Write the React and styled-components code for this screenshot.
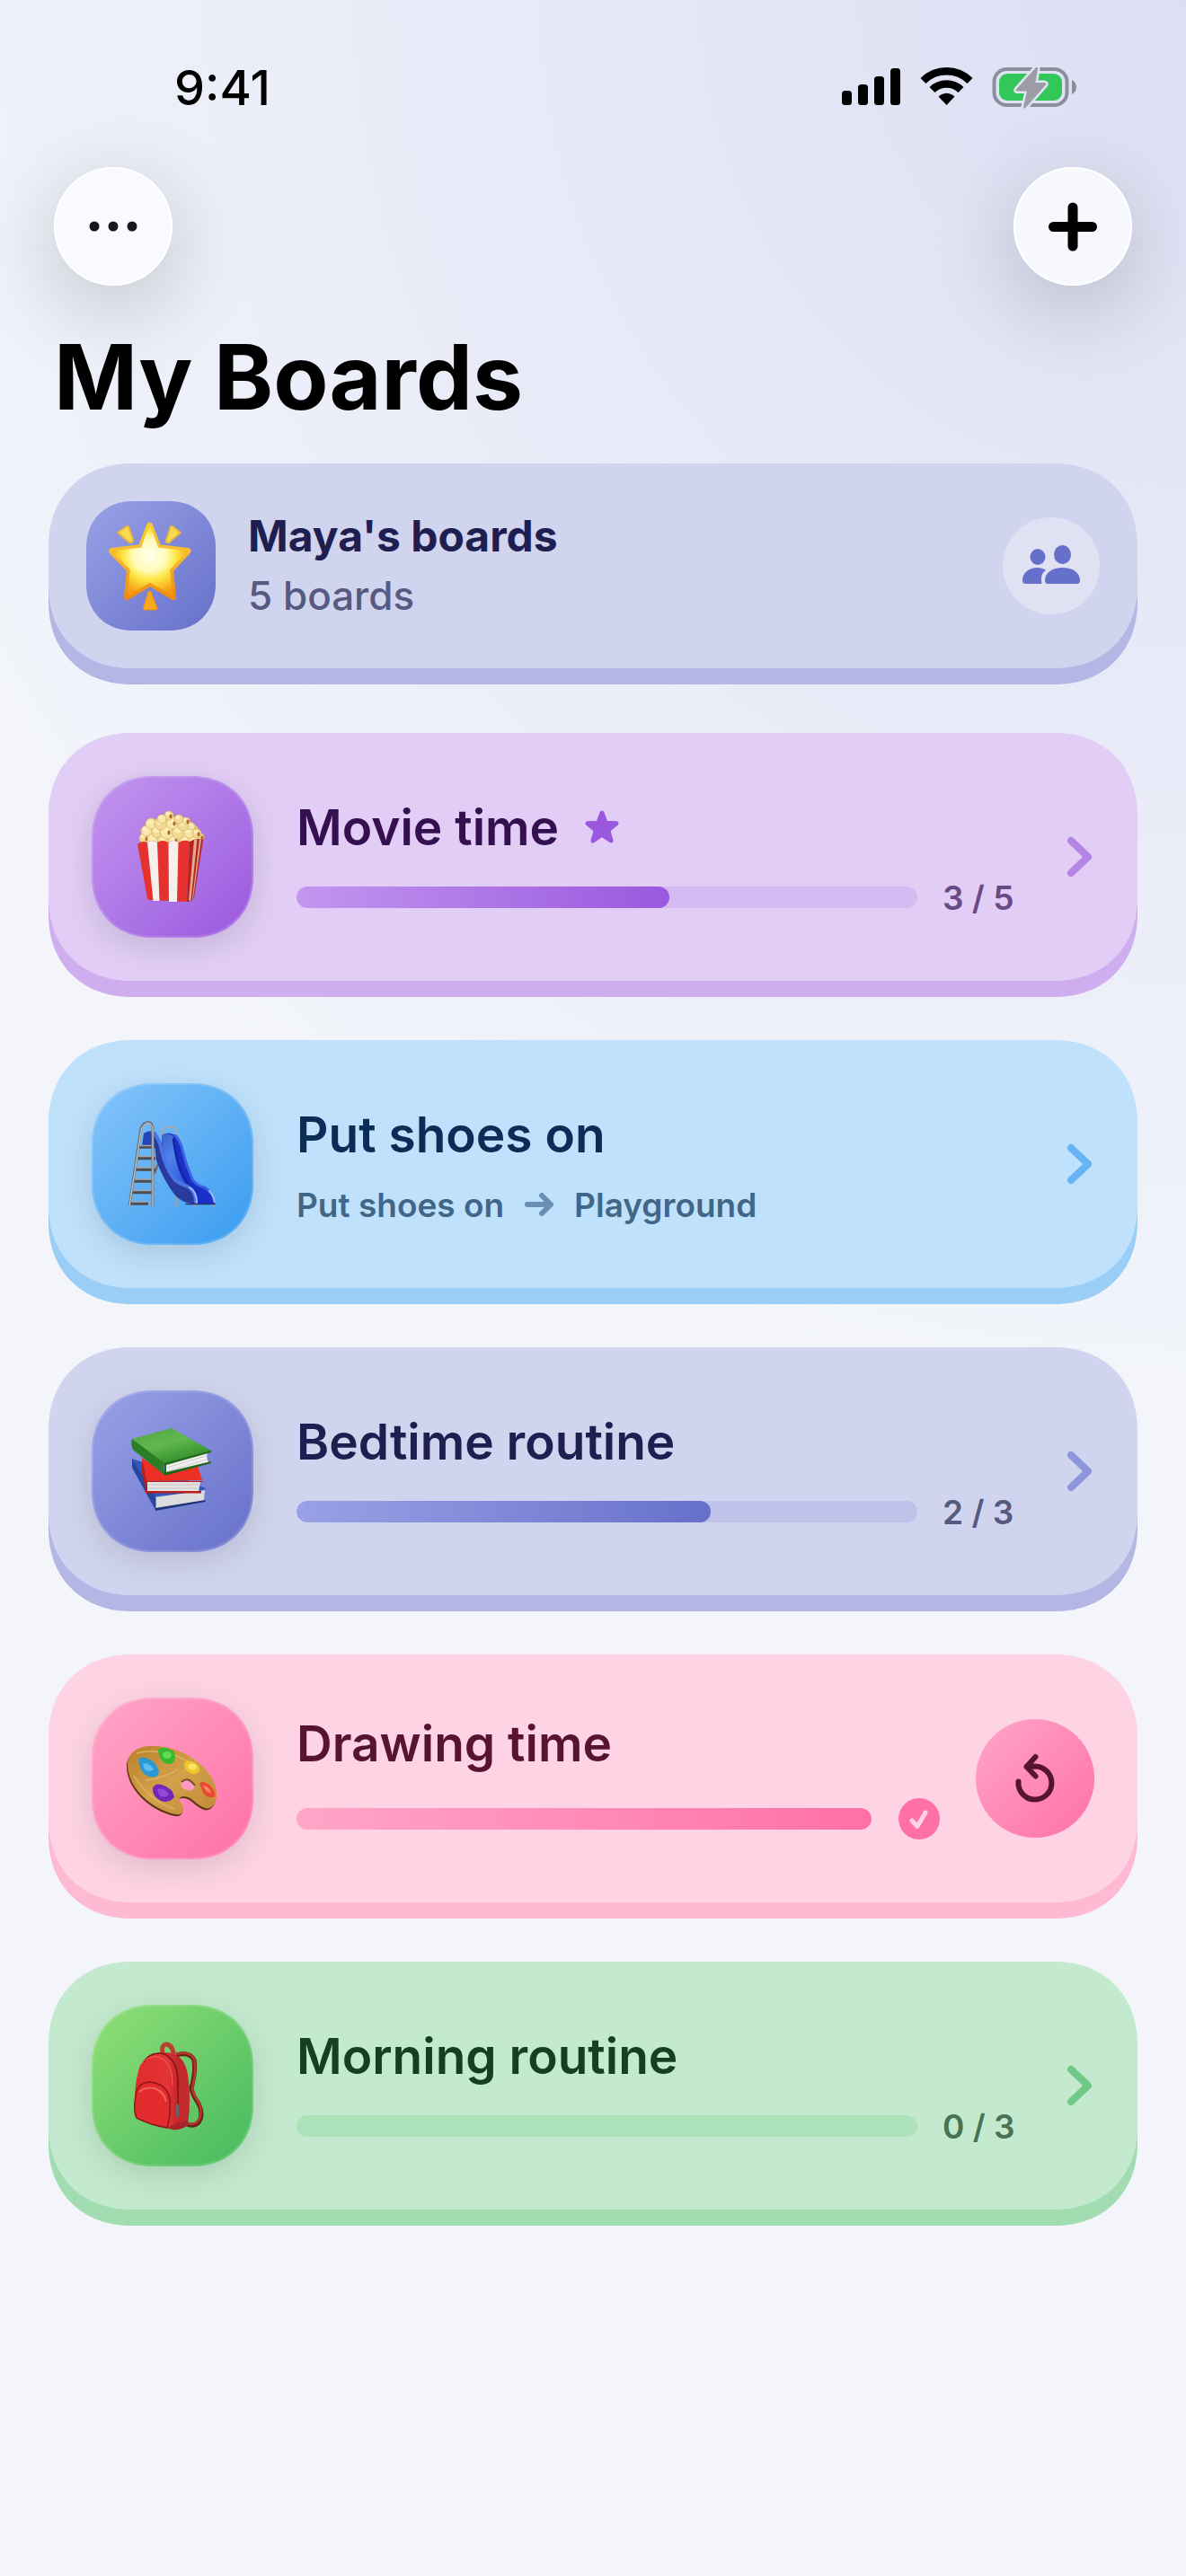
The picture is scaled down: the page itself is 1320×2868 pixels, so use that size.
import styled, { createGlobalStyle } from "styled-components"

const themes = {
  indigo: {
    face: "#d1d4ee",
    lip: "#b4b7e3",
    from: "#99a2e6",
    to: "#6670ca",
    text: "#1e1f50",
    sub: "#575a80",
    track: "#c0c3e9",
    chevron: "#8d96da",
  },
  purple: {
    face: "#e1cdf5",
    lip: "#ceaeee",
    from: "#c396f0",
    to: "#9a58de",
    text: "#341050",
    sub: "#6a4a84",
    track: "#d5bbf1",
    chevron: "#b485e5",
  },
  blue: {
    face: "#bfe1fc",
    lip: "#9bcef7",
    from: "#85c5fa",
    to: "#3a9cf0",
    text: "#0b2c55",
    sub: "#426688",
    track: "#9bcef7",
    chevron: "#66b4f6",
  },
  pink: {
    face: "#fed4e4",
    lip: "#feb9d3",
    from: "#ffa6c7",
    to: "#ff70a7",
    text: "#571431",
    sub: "#854a62",
    track: "#feb9d3",
    chevron: "#ff70a7",
  },
  green: {
    face: "#c3eace",
    lip: "#a2ddb2",
    from: "#92e077",
    to: "#44b95e",
    text: "#153f1e",
    sub: "#4a7355",
    track: "#aee2bb",
    chevron: "#70c987",
  },
}

const boards = [
  { title: "Movie time", tone: "purple", art: "popcorn", done: 3, total: 5, starred: true },
  { title: "Put shoes on", tone: "blue", art: "slide", first: "Put shoes on", then: "Playground" },
  { title: "Bedtime routine", tone: "indigo", art: "books", done: 2, total: 3 },
  { title: "Drawing time", tone: "pink", art: "palette", done: 4, total: 4 },
  { title: "Morning routine", tone: "green", art: "backpack", done: 0, total: 3 },
]

function App() {
  return (
    <Screen>
      <GlobalStyle />
      <StatusBar>
        <Time>9:41</Time>
        <StatusIcons />
      </StatusBar>

      <Toolbar>
        <RoundButton aria-label="More">
          <svg width="132" height="132" viewBox="0 0 132 132" fill="#16171c">
            <circle cx="45" cy="66" r="5.500" />
            <circle cx="66" cy="66" r="5.500" />
            <circle cx="87" cy="66" r="5.500" />
          </svg>
        </RoundButton>
        <RoundButton aria-label="Add board">
          <svg width="132" height="132" viewBox="0 0 132 132">
            <path d="M66 45v43M44.500 66.500h43" stroke="#000" strokeWidth="11" strokeLinecap="round" />
          </svg>
        </RoundButton>
      </Toolbar>

      <PageTitle>My Boards</PageTitle>

      <ProfileCard $t={themes.indigo}>
        <Tile $t={themes.indigo} $size={144} $radius={52} $flat>
          <GlowingStar />
        </Tile>
        <ProfileText>
          <ProfileName>Maya's boards</ProfileName>
          <ProfileCount>5 boards</ProfileCount>
        </ProfileText>
        <PeopleButton aria-label="Switch child">
          <svg width="108" height="108" viewBox="0 0 108 108" fill="#666fca">
            <ellipse cx="39" cy="44" rx="8.500" ry="9" />
            <ellipse cx="66.500" cy="41.500" rx="9.500" ry="10.500" />
            <path d="M50 74q-3 0-3-4c0-8 8-14 19.500-14S86 62 86 70q0 4-3 4z" />
            <path d="M25.500 74q-3.500 0-3.500-4c0-8 7-14 17-14q5 0 9 2.500q-5 4-5 10q0 3 .5 5.500z" />
          </svg>
        </PeopleButton>
      </ProfileCard>

      <BoardList>
        {boards.map((board) => (
          <BoardCard key={board.title} board={board} />
        ))}
      </BoardList>
    </Screen>
  )
}

function BoardCard({ board }) {
  const t = themes[board.tone]
  const Art = arts[board.art]
  const finished = board.total > 0 && board.done === board.total

  return (
    <Card $t={t}>
      <Tile $t={t} $size={180} $radius={68}>
        <Art />
      </Tile>

      <CardBody $finished={finished}>
        <TitleRow>
          <CardTitle href="#">{board.title}</CardTitle>
          {board.starred && (
            <svg width="40" height="40" viewBox="0 0 40 40" fill={t.to} stroke={t.to} strokeWidth="5" strokeLinejoin="round">
              <path d="M20 4L24.200 15.300L36 15.800L26.700 23.200L30 35L20 28.200L10 35L13.300 23.200L4 15.800L15.800 15.300Z" />
            </svg>
          )}
        </TitleRow>

        {board.then ? (
          <Steps $t={t}>
            <span>{board.first}</span>
            <svg width="34" height="28" viewBox="0 0 34 28" fill="none" stroke="#6a8fb2" strokeWidth="6" strokeLinecap="round" strokeLinejoin="round">
              <path d="M4 14h26M20 4l10 10l-10 10" />
            </svg>
            <span>{board.then}</span>
          </Steps>
        ) : (
          <ProgressRow $finished={finished}>
            <Track
              $t={t}
              role="progressbar"
              aria-label={board.title}
              aria-valuenow={board.done}
              aria-valuemax={board.total}
            >
              <Fill $t={t} style={{ width: `${(board.done / board.total) * 100}%` }} />
            </Track>
            {finished ? (
              <svg width="46" height="46" viewBox="0 0 46 46">
                <circle cx="23" cy="23" r="23" fill={t.to} />
                <path d="M15 25l6 6.500L30 16" fill="none" stroke={t.face} strokeWidth="5" strokeLinecap="round" strokeLinejoin="round" />
              </svg>
            ) : (
              <Count $t={t}>
                {board.done} / {board.total}
              </Count>
            )}
          </ProgressRow>
        )}
      </CardBody>

      {finished ? (
        <RestartButton $t={t} aria-label="Start again">
          <svg width="132" height="132" viewBox="0 0 132 132" fill="none" stroke={t.text} strokeWidth="6" strokeLinecap="round" strokeLinejoin="round">
            <path d="M47.500 69.500A18.500 18.500 0 1 0 66 52.500L57 53" />
            <path d="M66.500 42L56.500 53L66.500 63.500" />
          </svg>
        </RestartButton>
      ) : (
        <Chevron width="39" height="48" viewBox="0 0 39 48" stroke={t.chevron}>
          <path d="M13 6l19 18l-19 18" />
        </Chevron>
      )}
    </Card>
  )
}

function StatusIcons() {
  return (
    <svg width="264" height="48" viewBox="0 0 264 48" role="img" aria-label="Signal, wifi and battery">
      {/* signal */}
      <rect x="3" y="28" width="11" height="16" rx="3.500" />
      <rect x="21" y="21" width="11" height="23" rx="3.500" />
      <rect x="39" y="12" width="11" height="32" rx="3.500" />
      <rect x="57" y="3" width="11" height="41" rx="3.500" />
      {/* wifi */}
      <g fill="none" stroke="#000" strokeWidth="8.500">
        <path d="M93.500 17a37 37 0 0 1 52 0" />
        <path d="M103.500 27a23 23 0 0 1 32 0" />
      </g>
      <path d="M119.500 44l-9-9.500q9-7.500 18 0z" />
      {/* battery */}
      <rect x="172.500" y="4" width="81" height="40" rx="14" fill="none" stroke="#8d8e9c" strokeWidth="4" />
      <rect x="178" y="9" width="70" height="30" rx="9" fill="#33c759" />
      <path d="M259 16q5 2.500 5 8t-5 8z" fill="#8d8e9c" />
      <path d="M219 2L197 26.500q-1 2 1.500 2H209L205 46q0 3 2.500 1L230 21.500q1-2.500-2-2.500H218.500L221 4q0-3-2-2z" fill="#9c9ca9" stroke="#e2e4f4" strokeWidth="5" paintOrder="stroke" />
    </svg>
  )
}

function GlowingStar() {
  return (
    <svg width="144" height="144" viewBox="0 0 144 144">
      <defs>
        <linearGradient id="starEdge" x1="0" y1="0" x2="0" y2="1">
          <stop offset="0" stopColor="#f8c63c" />
          <stop offset=".45" stopColor="#f5b92d" />
          <stop offset="1" stopColor="#ef8a10" />
        </linearGradient>
        <radialGradient id="starCore" cx=".5" cy=".42" r=".6">
          <stop offset="0" stopColor="#fffff0" />
          <stop offset=".4" stopColor="#fffbb8" />
          <stop offset=".62" stopColor="#fde743" />
          <stop offset="1" stopColor="#f59a12" />
        </radialGradient>
      </defs>
      <path d="M45 28L35 35L48 46Q52 47 52 43L47 28Z" fill="#f8db4e" stroke="#e8b73a" strokeWidth="2" strokeLinejoin="round" />
      <path d="M96 28L105 35L92 46Q88 47 89 43L94 28Z" fill="#f8db4e" stroke="#e8b73a" strokeWidth="2" strokeLinejoin="round" />
      <path d="M69 101q1.500-2 3 0L79 119q0 2-2 2H65q-2 0-1.500-2z" fill="#f7a81b" stroke="#ea9220" strokeWidth="1" />
      <path d="M70.500 27L80 51.500L113 55.500L93.500 76.500L96.500 106.500L71 91L45.500 106.500L48.500 76.500L28.500 55.500L61 51.500Z" fill="url(#starEdge)" stroke="url(#starEdge)" strokeWidth="7" strokeLinejoin="round" />
      <path d="M70.500 29L79 53L110 56.500L91.500 76L94.500 103L71 89L47.500 103L50.500 76L31.500 56.500L62.500 53Z" fill="url(#starCore)" stroke="url(#starCore)" strokeWidth="3" strokeLinejoin="round" />
    </svg>
  )
}

const kernels = [
  [59, 69, 6], [69, 70, 7], [80, 71, 7], [92, 71, 7], [104, 71, 7], [115, 70, 7], [121, 68, 4],
  [61, 61, 6], [73, 62, 7], [84, 62, 8], [97, 62, 8], [109, 62, 7], [117, 64, 5],
  [66, 53, 6], [77, 53, 7], [90, 52, 7], [102, 54, 7], [111, 56, 4],
  [86, 44, 5], [78, 48, 5], [97, 48, 5], [105, 50, 4],
]

function Popcorn() {
  return (
    <svg width="180" height="180" viewBox="0 0 180 180">
      <path d="M54 73Q54 48 86 45Q122 47 124 73Z" fill="#e6c983" />
      {kernels.map(([x, y, r], i) => (
        <g key={i}>
          <circle cx={x} cy={y} r={r} fill={i % 2 ? "#f7e6a8" : "#f2da92"} stroke="#d9b566" strokeWidth=".8" />
          <circle cx={x - 1} cy={y - 2} r={r / 2.2} fill="#fbeeb9" />
          {i % 3 === 0 && <ellipse cx={x + 2} cy={y + 1} rx="1.600" ry="2.400" fill="#b06b28" />}
        </g>
      ))}
      <path d="M51 76q5-5 11-2q6-4 11 0q6-4 12 0q6-4 12 0q6-4 12-1L106 140L64 138q-1.500 0-2-2z" fill="#e5322f" />
      <path d="M62 74q5-4 11 0L75.500 139H68.500Z" fill="#f7efec" />
      <path d="M85.500 74q5-4 11 0L95 140H86Z" fill="#f7efec" />
      <path d="M109 73q8-5 15-2L114 135q-3 5-8 5z" fill="#b5241f" />
      <path d="M114 71l3.500-.8L110.500 138l-2.500 1z" fill="#e2a98f" />
      <path d="M120 70.500l2 0L113 136l-1 1z" fill="#e2a98f" />
    </svg>
  )
}

function Slide() {
  return (
    <svg width="180" height="180" viewBox="0 0 180 180" fill="none" strokeLinecap="round">
      <defs>
        <linearGradient id="bed" x1="0" y1="0" x2=".5" y2="1">
          <stop offset="0" stopColor="#3c62c8" />
          <stop offset=".4" stopColor="#4f82ec" />
          <stop offset="1" stopColor="#2c55d8" />
        </linearGradient>
      </defs>
      <g stroke="#9a9ea6" strokeWidth="2.500" strokeLinecap="butt">
        <path d="M94 118V137.500M115.500 132V137.500M136 132V137.500" />
      </g>
      <path d="M78 80L70 100" stroke="#6d7078" strokeWidth="2.500" />
      <path d="M78 60V53Q80 48.500 86 48.500H90Q94 49 94 53V66" stroke="#a4a9b0" strokeWidth="2" />
      {/* chute */}
      <path d="M56 70L58 56Q64 51 72 55L74 72H56Z" fill="#2545b8" />
      <path d="M78 58Q85 53 93 58Q98 63 101 74Q105 91 112 107Q117 114 126 116Q136 122 137 134H113Q96 128 88 108Q78 88 78 70Z" fill="#1b30c8" />
      <path d="M78 58Q84 54 91 59Q91 78 97 97Q102 113 113 120L110 126Q96 118 88 103Q79 84 78 58Z" fill="url(#bed)" />
      <path d="M91 62Q93 82 100 98Q105 112 117 121" stroke="#1526a4" strokeWidth="2.500" />
      <path d="M93 58Q98 63 101 74Q105 91 112 107Q117 114 126 116Q135 122 136.500 132" stroke="#3d62e0" strokeWidth="3" />
      <path d="M69 58Q75 62 78 75Q83 96 93 108Q98 112 107 115Q116 120 116 134Q103 135 93 125Q80 108 72 86Z" fill="#2a3a9c" />
      <path d="M68 55Q75 60 78 75Q83 96 93 108Q98 112 107 115Q116 120 116 133" stroke="#4a74e6" strokeWidth="4" />
      <path d="M109 116Q117 121 117 133M131 120Q136 125 137 132" stroke="#9bbcff" strokeWidth="2" />
      <path d="M105 134.500H137" stroke="#26316e" strokeWidth="1.500" />
      {/* ladder */}
      <g stroke="#4c4e52" strokeWidth="3.500" strokeLinecap="butt">
        <path d="M53 71H68M50 83.500H71M48.500 96H71M46.500 109H67M44.500 121.500H67M42.500 134H63" />
      </g>
      <g stroke="#a3a5a8" strokeWidth="1.500" strokeLinecap="butt">
        <path d="M53 69.500H68M50 81.500H71M48.500 94H71M46.500 107H67M44.500 119.500H67M42.500 132H63" />
      </g>
      <path d="M42 137L55 50Q57 44 63 43.500Q68 44 68 51V137" stroke="#74777c" strokeWidth="3" strokeLinecap="butt" />
      <path d="M42 137L55.500 51Q58 45 63 44.500Q67.500 45 68 51V137" stroke="#d3d2cc" strokeWidth="1" strokeLinecap="butt" />
    </svg>
  )
}

function Books() {
  return (
    <svg width="180" height="180" viewBox="0 0 180 180">
      <defs>
        <linearGradient id="greenCover" x1="0" y1="0" x2=".6" y2="1">
          <stop offset="0" stopColor="#4da43f" />
          <stop offset=".5" stopColor="#62b850" />
          <stop offset="1" stopColor="#2f8a28" />
        </linearGradient>
      </defs>
      {/* blue */}
      <path d="M45 76L72 85L127 109L124 113L71 118Z" fill="#3357bd" />
      <path d="M72 119L126 111L125 123L72 131Z" fill="#dcdcdf" />
      <path d="M45 76L71 118V133L45 86Z" fill="#27459b" />
      <path d="M71 131L126.500 122V124L71 134Z" fill="#1e3478" />
      {/* red */}
      <path d="M56 75L81 93L118 84L123 100L61 101Z" fill="#ee3024" />
      <path d="M61 101H121L119 113H61Z" fill="#e4e2e2" />
      <path d="M62 105H119M62 109H118" stroke="#c6c3c4" strokeWidth="1" />
      <path d="M56 75L61 101V114L56 92Z" fill="#bb1f1b" />
      <path d="M60 101H123V102H62V112H122V114.500H60Z" fill="#b61d1b" />
      {/* green */}
      <path d="M45 54L89 42L133 67L81 82Z" fill="url(#greenCover)" />
      <path d="M81 82L129 69Q127 74 130 80L82 93Z" fill="#f0efee" />
      <path d="M84 86L127 73M84 90L128 77" stroke="#cfcfcc" strokeWidth="1" />
      <path d="M45 54L81 81Q79 87 82 95L46 66Q43 60 45 54Z" fill="#2c7e25" />
      <path d="M81 81L133 67V69L83 83V91L133 79V81L81 95Z" fill="#1f661c" />
    </svg>
  )
}

function Palette() {
  return (
    <svg width="180" height="180" viewBox="0 0 180 180">
      <defs>
        <linearGradient id="wood" x1="0" y1="0" x2="1" y2="1">
          <stop offset="0" stopColor="#b97f28" />
          <stop offset=".5" stopColor="#d3a14a" />
          <stop offset="1" stopColor="#c08a36" />
        </linearGradient>
      </defs>
      <path transform="translate(-1 2)" fill="#5d3710" d="M40 75C40 61 52 54 67 54C101 53 139 79 139 108C139 119 133 125 126 123C115 119 112 110 103 110C96 110 97 115 101 120C104 127 100 131 94 130C64 124 40 98 40 75Z" />
      <path fill="url(#wood)" d="M40 75C40 61 52 54 67 54C101 53 139 79 139 108C139 119 133 125 126 123C115 119 112 110 103 110C96 110 97 115 101 120C104 127 100 131 94 130C64 124 40 98 40 75Z" />
      <path d="M50 62Q80 54 112 74M47 87Q66 116 92 124M60 92Q80 90 96 80" fill="none" stroke="#dcb063" strokeWidth="1.500" />
      <ellipse cx="107" cy="97" rx="8" ry="6" transform="rotate(25 107 97)" fill="#ff9bc0" />
      <path d="M100 94Q107 87 115 98" fill="none" stroke="#7c4d17" strokeWidth="2" />
      <path d="M74 60Q74 55 82 56Q93 58 93 66Q92 75 85 74Q76 73 74 60Z" fill="#39b72e" />
      <ellipse cx="84" cy="64" rx="5" ry="4" fill="#62dc52" />
      <path d="M52 70Q52 65 60 67Q73 71 75 83Q73 91 64 88Q54 85 52 70Z" fill="#2d97d2" />
      <path d="M57 74Q63 71 69 80Q64 84 59 80Z" fill="#5bbdf0" />
      <path d="M103 74Q104 69 111 71Q121 75 120 82Q114 88 108 83Q103 80 103 74Z" fill="#f0c62a" />
      <ellipse cx="112" cy="77" rx="5" ry="3.500" fill="#fbe65d" />
      <path d="M68 101Q70 95 78 97Q91 101 92 111Q86 118 77 115Q67 110 68 101Z" fill="#7426b8" />
      <path d="M73 102Q80 99 86 108Q80 113 75 108Z" fill="#9449d6" />
      <path d="M120 95Q124 92 131 97Q139 105 137 110Q130 114 124 106Z" fill="#e8492f" />
      <path d="M124 98Q130 98 133 106Q128 107 124 98Z" fill="#ff8566" />
    </svg>
  )
}

function Backpack() {
  return (
    <svg width="180" height="180" viewBox="0 0 180 180">
      <defs>
        <linearGradient id="bag" x1="0" y1="0" x2="1" y2="0">
          <stop offset="0" stopColor="#e02a2b" />
          <stop offset=".6" stopColor="#e43436" />
          <stop offset=".8" stopColor="#c42427" />
          <stop offset="1" stopColor="#bb3034" />
        </linearGradient>
      </defs>
      <path d="M94 56Q110 52 114 62Q116 74 111 93Q112 100 119 110Q125 122 119 131Q114 136 106 133" fill="none" stroke="#6f2018" strokeWidth="5" />
      <path d="M94 55Q110 51 114 61Q117 74 112 93Q113 100 120 110Q124 122 118 130Q114 134 107 132" fill="none" stroke="#b5382f" strokeWidth="2.500" />
      <path d="M79 54Q77 44 84 44Q91 46 91 56" fill="none" stroke="#b5432f" strokeWidth="5" />
      <path d="M52 74Q56 55 79 53Q103 52 107 78Q111 104 107 133Q101 140 91 139Q72 136 50 126Q47 124 48 108Q48 88 52 74Z" fill="url(#bag)" />
      <path d="M79 53Q94 57 96 82L92 139L107 135Q111 102 107 78Q102 53 79 53Z" fill="#c42a2c" opacity=".5" />
      <path d="M58 64Q64 53 78 54Q95 59 96 84V122" fill="none" stroke="#7d1517" strokeWidth="1.500" />
      <path d="M55 66Q63 56 75 58Q90 63 90 90" fill="none" stroke="#f5615c" strokeWidth="1" />
      <path d="M50 96Q54 86 65 86Q84 88 87 105Q88 124 84 137Q66 134 50 126Q47 120 48 108Z" fill="#e22c2d" stroke="#8d1718" strokeWidth="1.500" />
      <path d="M53 97Q60 91 70 93Q81 97 83 108" fill="none" stroke="#f4605a" strokeWidth="2" />
      <path d="M84 137L92 133L107 129V134Q99 140 89 139Z" fill="#97242a" opacity=".7" />
      <ellipse cx="95.500" cy="118" rx="2" ry="8" fill="#68666b" />
    </svg>
  )
}

const arts = {
  popcorn: Popcorn,
  slide: Slide,
  books: Books,
  palette: Palette,
  backpack: Backpack,
}

const GlobalStyle = createGlobalStyle`
  * {
    box-sizing: border-box;
  }

  body {
    margin: 0;
    font-family: Inter, "Liberation Sans", sans-serif;
    background-color: #f3f5fb;
  }

  button {
    padding: 0;
    border: none;
    cursor: pointer;
  }

  svg {
    display: block;
    flex: none;
  }
`

const Screen = styled.main`
  min-height: 100vh;
  padding: 0 54px 96px;
  background:
    radial-gradient(circle at 100% 0, #dcdff3 0, rgba(224, 226, 244, 0) 1560px),
    #f3f5fb;
`

const StatusBar = styled.div`
  display: flex;
  justify-content: space-between;
  align-items: center;
  height: 186px;
  padding: 8px 68px 0 140px;
`

const Time = styled.span`
  font-size: 54px;
  font-weight: 500;
`

const Toolbar = styled.div`
  display: flex;
  justify-content: space-between;
  padding: 0 6px;
`

const RoundButton = styled.button`
  width: 132px;
  height: 132px;
  border-radius: 50%;
  background-color: rgba(250, 252, 255, 0.85);
  box-shadow:
    inset 0 0 0 2px #fff,
    0 24px 96px rgba(0, 0, 0, 0.2);
`

const PageTitle = styled.h1`
  margin: 42px 0 36px;
  padding: 0 6px;
  font-size: 100px;
  font-weight: 700;
  line-height: 120px;
  color: #000;
`

const Card = styled.article`
  display: flex;
  align-items: center;
  min-height: 276px;
  padding: 48px;
  border-radius: 92px;
  corner-shape: superellipse(1.1);
  background-color: ${(p) => p.$t.face};
  box-shadow: 0 18px 0 ${(p) => p.$t.lip};
  color: ${(p) => p.$t.text};
`

const ProfileCard = styled(Card)`
  min-height: 228px;
  padding: 42px;
`

const BoardList = styled.section`
  display: flex;
  flex-direction: column;
  gap: 66px;
  margin-top: 72px;
`

const Tile = styled.div`
  flex: none;
  width: ${(p) => p.$size}px;
  height: ${(p) => p.$size}px;
  border-radius: ${(p) => p.$radius}px;
  corner-shape: superellipse(1.1);
  background: linear-gradient(135deg, ${(p) => p.$t.from}, ${(p) => p.$t.to});
  box-shadow: ${(p) =>
    p.$flat
      ? "none"
      : "inset 0 0 0 2px rgba(255, 255, 255, 0.15), 0 10px 36px rgba(0, 0, 0, 0.12)"};
`

const ProfileText = styled.div`
  flex: 1;
  margin-left: 36px;
`

const ProfileName = styled.h2`
  margin: 0;
  font-size: 48px;
  font-weight: 700;
  line-height: 66px;
`

const ProfileCount = styled.p`
  margin: 0;
  font-size: 44px;
  font-weight: 500;
  line-height: 66px;
  color: ${themes.indigo.sub};
`

const PeopleButton = styled.button`
  width: 108px;
  height: 108px;
  border-radius: 50%;
  background-color: #e0e1f3;
`

const CardBody = styled.div`
  flex: 1;
  min-width: 0;
  margin: 0 ${(p) => (p.$finished ? 40 : 48)}px 0 48px;
  padding-top: 6px;
`

const TitleRow = styled.div`
  display: flex;
  align-items: center;
  gap: 28px;
  height: 84px;
`

const CardTitle = styled.a`
  font-size: 55px;
  font-weight: 600;
  line-height: 72px;
  color: inherit;
  text-decoration: none;
`

const ProgressRow = styled.div`
  display: flex;
  align-items: center;
  gap: ${(p) => (p.$finished ? 30 : 28)}px;
  height: ${(p) => (p.$finished ? 84 : 72)}px;
`

const Track = styled.div`
  flex: 1;
  height: 24px;
  border-radius: 12px;
  overflow: hidden;
  background-color: ${(p) => p.$t.track};
`

const Fill = styled.div`
  height: 100%;
  border-radius: 12px;
  background: linear-gradient(90deg, ${(p) => p.$t.from}, ${(p) => p.$t.to});
`

const Count = styled.span`
  width: 82px;
  font-size: 37px;
  font-weight: 600;
  white-space: nowrap;
  color: ${(p) => p.$t.sub};
`

const Steps = styled.div`
  display: flex;
  align-items: center;
  gap: 22px;
  height: 72px;
  font-size: 37px;
  font-weight: 600;
  color: ${(p) => p.$t.sub};
`

const Chevron = styled.svg`
  fill: none;
  stroke-width: 8px;
  stroke-linecap: round;
  stroke-linejoin: round;
`

const RestartButton = styled.button`
  width: 132px;
  height: 132px;
  border-radius: 50%;
  background: linear-gradient(135deg, ${(p) => p.$t.from}, ${(p) => p.$t.to});
`

export default App
